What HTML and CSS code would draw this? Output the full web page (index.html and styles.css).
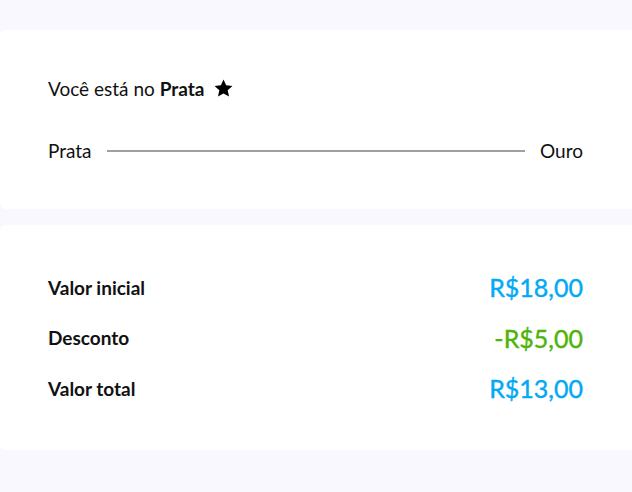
FILE: index.html
```
<!DOCTYPE html>
<html lang="pt-BR">
<head>
    <meta charset="UTF-8">
    <meta name="viewport" content="width=device-width, initial-scale=1.0">
    <title>Nível</title>
    <link rel="stylesheet" href="styles.css">
</head>
<body>
    <div class="page">
        <div class="card level-card">
            <p class="level-title">Você está no&nbsp;<strong>Prata</strong>
                <svg class="star" viewBox="0 0 24 24" width="21" height="21">
                    <path d="M12 1.8l3 6.6 7.2.8-5.4 4.9 1.5 7.1L12 17.6l-6.3 3.6 1.5-7.1L1.8 9.2 9 8.4z" fill="#000"/>
                </svg>
            </p>
            <div class="level-progress">
                <span>Prata</span>
                <div class="progress-line"></div>
                <span>Ouro</span>
            </div>
        </div>

        <div class="card summary-card">
            <div class="summary-row">
                <span class="label">Valor inicial</span>
                <span class="value">R$18,00</span>
            </div>
            <div class="summary-row">
                <span class="label">Desconto</span>
                <span class="value discount">-R$5,00</span>
            </div>
            <div class="summary-row">
                <span class="label">Valor total</span>
                <span class="value">R$13,00</span>
            </div>
        </div>
    </div>
</body>
</html>
```

FILE: styles.css
```
body {
    font-family: Lato, "Noto Sans", sans-serif;
    background-color: #f9f8fe;
    color: #111;
    margin: 0;
    padding: 0;
}

.page {
    padding-top: 30px;
}

.card {
    background-color: #fff;
    border-radius: 6px 0 0 6px;
    padding: 0 49px 0 48px;
}

.level-card {
    padding-top: 48px;
    padding-bottom: 48px;
    margin-bottom: 16px;
}

.level-title {
    margin: 0 0 42px;
    font-size: 19px;
    line-height: 20px;
    display: flex;
    align-items: center;
}

.star {
    margin-left: 9px;
}

.level-progress {
    display: flex;
    align-items: center;
    font-size: 19px;
    line-height: 20px;
}

.progress-line {
    flex: 1;
    height: 2px;
    background-color: #a0a0a0;
    margin: 0 15px;
}

.summary-card {
    padding-top: 47px;
    padding-bottom: 47px;
    display: flex;
    flex-direction: column;
    gap: 20.5px;
}

.summary-row {
    display: flex;
    justify-content: space-between;
    align-items: center;
    height: 30px;
}

.label {
    font-weight: bold;
    font-size: 19px;
}

.value {
    font-size: 25px;
    color: #03a9f4;
    -webkit-text-stroke: 0.4px currentColor;
}

.value.discount {
    color: #4fb30a;
}
```
